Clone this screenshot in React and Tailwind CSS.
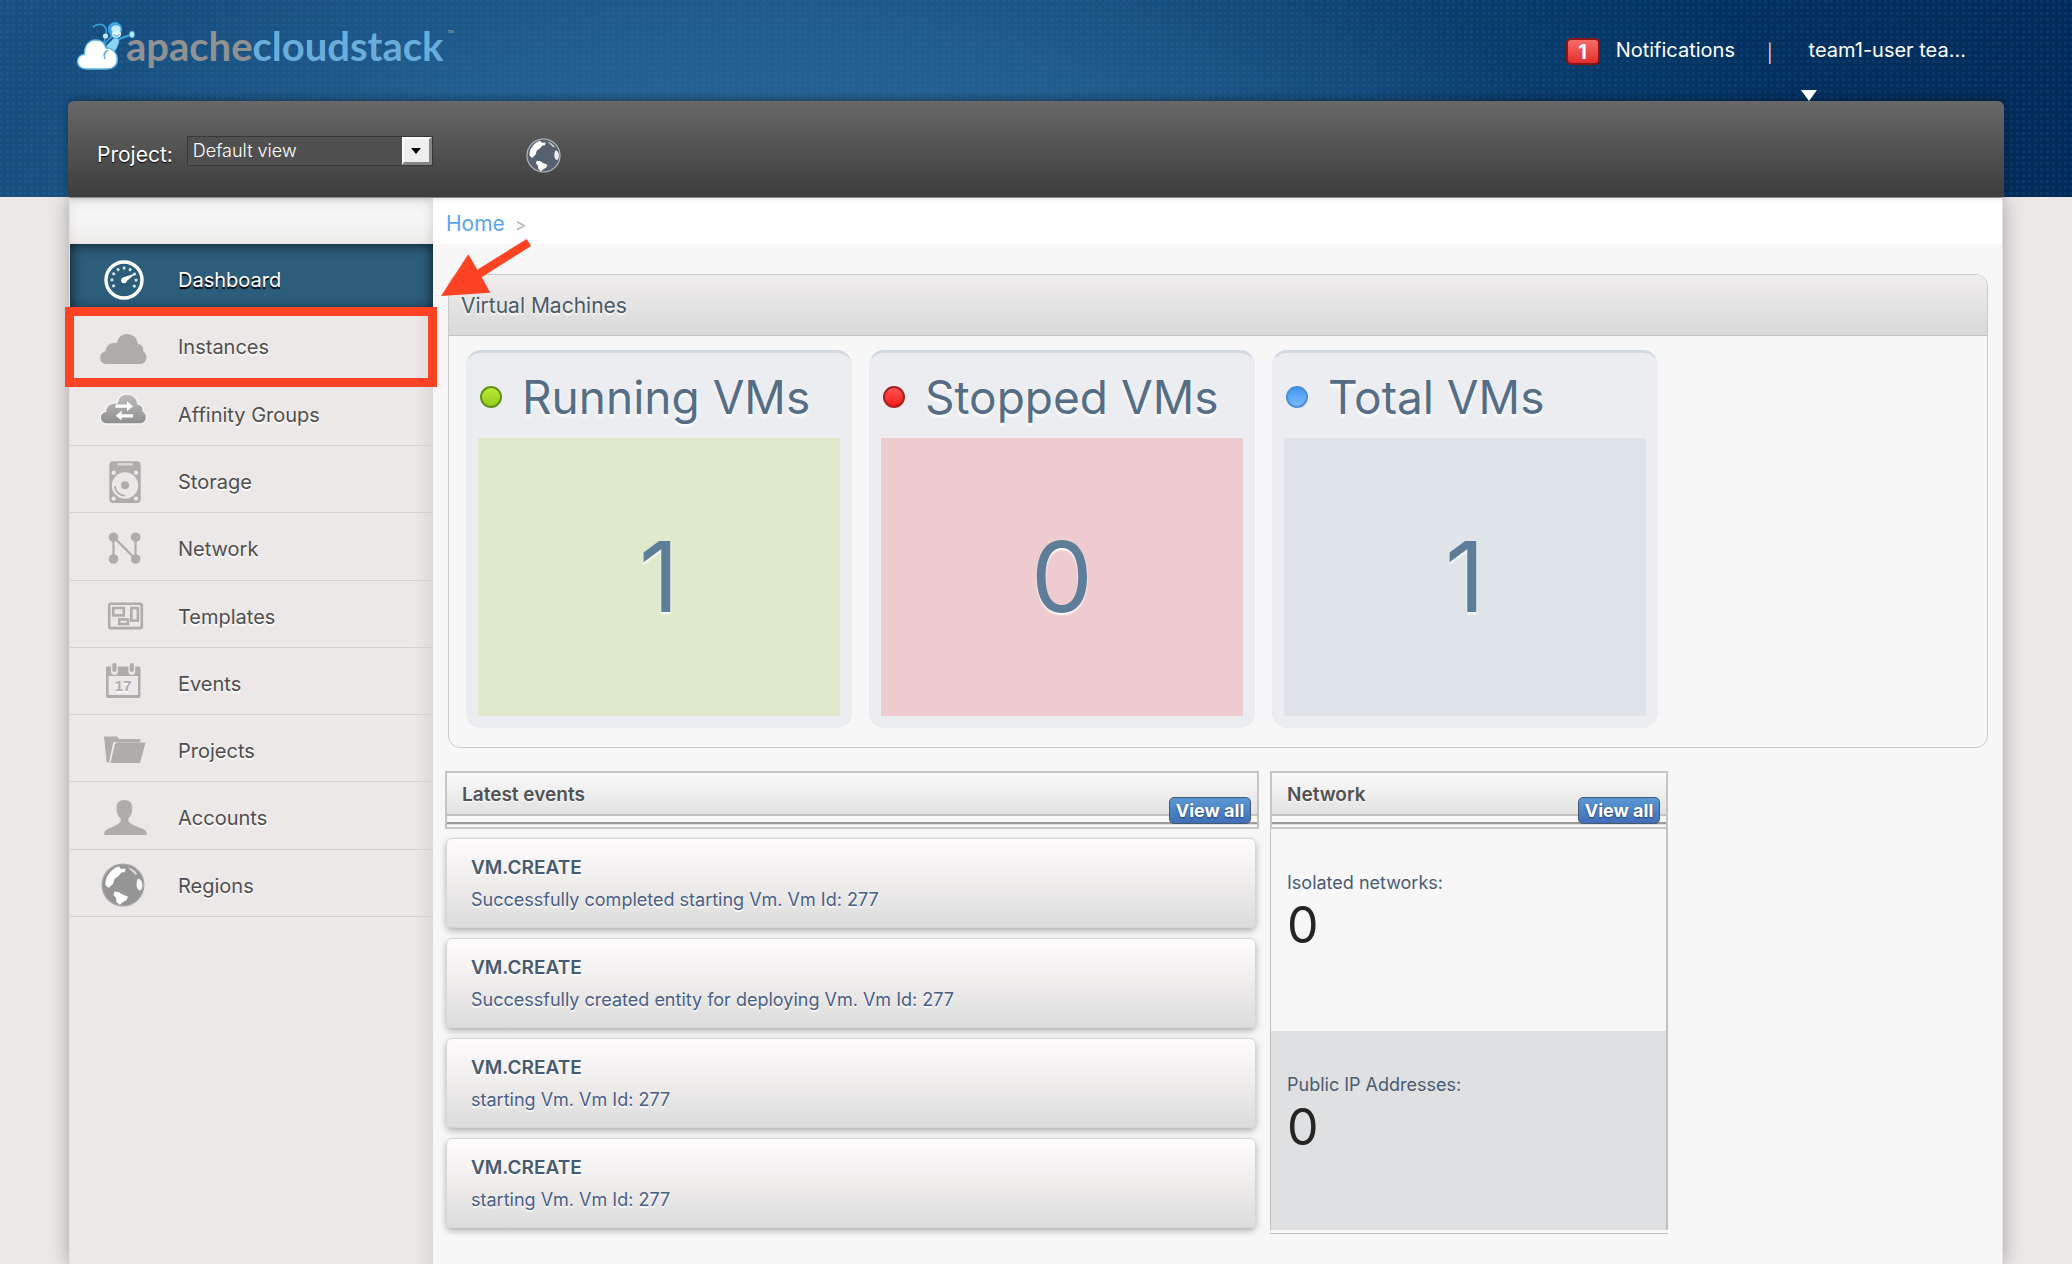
import React from "react";

const GREY = "#aeadac";

function DashboardIcon() {
  const ticks = [-120, -90, -60, -30, 0, 30, 60, 90, 120];
  return (
    <svg className="h-[67px] w-12 shrink-0" viewBox="0 0 48 67" aria-hidden="true">
      <circle cx="24" cy="36" r="18" fill="none" stroke="#fff" strokeWidth="3.4" />
      {ticks.map((a) => (
        <rect key={a} x="22.8" y="22.6" width="2.6" height="2.8" fill="#fff" opacity="0.85" transform={`rotate(${a} 24 36)`} />
      ))}
      <circle cx="24" cy="36.3" r="2.9" fill="#fff" />
      <path d="M23 33.6 36 29.2 25.6 38Z" fill="#fff" />
    </svg>
  );
}

const CLOUD =
  "M6.5 53C2.800 53 .2 50.300.2 46.700c0-3.300 2.300-5.800 5.400-6.400.2-4 2.600-7.400 7-8.300 1-.2 3.600-.2 4.400 0C18 26.500 21.600 23 26.600 23c6 0 10.500 3.600 11.200 9.800 4 .7 5.900 3.400 5.300 7.400 2.200 1.300 3.400 3.400 3.400 6C46.500 50.400 43.400 53 40 53Z";

function InstancesIcon() {
  return (
    <svg className="h-[67px] w-12 shrink-0" viewBox="0 0 48 67" aria-hidden="true">
      <path d={CLOUD} fill={GREY} />
    </svg>
  );
}

function AffinityIcon() {
  return (
    <svg className="h-[67px] w-12 shrink-0" viewBox="0 0 48 67" aria-hidden="true">
      <defs>
        <linearGradient id="affinity" x1="0" y1="0" x2="0" y2="1">
          <stop offset="0" stopColor="#bdbdbd" />
          <stop offset="1" stopColor="#8e8e8e" />
        </linearGradient>
      </defs>
      <g transform="translate(0 -8)">
        <path d={CLOUD} fill="url(#affinity)" stroke="#f6f5f5" strokeWidth="1.4" />
        <path d="M15.500 33.500H27v-3.300l6 5-6 5v-3.500H15.500ZM33 46.400H21.700v3.200l-6-4.900 6-5v3.500H33Z" fill="#fff" />
      </g>
    </svg>
  );
}

function StorageIcon() {
  return (
    <svg className="h-[67px] w-12 shrink-0" viewBox="0 0 48 67" aria-hidden="true">
      <rect x="9.300" y="15.300" width="31.400" height="41.600" rx="4" fill={GREY} />
      <rect x="17.500" y="17" width="15.500" height="2.600" rx="1.300" fill="#ebe8e7" opacity="0.7" />
      <circle cx="25" cy="39.500" r="13.200" fill="#ebe8e7" />
      <circle cx="25" cy="39.300" r="4" fill={GREY} />
      <path d="M15 40c0 5.600 4.500 9.600 10.200 9.800" fill="none" stroke={GREY} strokeWidth="1.600" />
      <circle cx="13.700" cy="26.700" r="2.200" fill="#ebe8e7" />
      <circle cx="36" cy="26.700" r="2.200" fill="#ebe8e7" />
      <circle cx="13.700" cy="52.600" r="2.200" fill="#ebe8e7" />
      <circle cx="36" cy="52.600" r="2.200" fill="#ebe8e7" />
    </svg>
  );
}

function NetworkIcon() {
  return (
    <svg className="h-[67px] w-12 shrink-0" viewBox="0 0 48 67" aria-hidden="true">
      <path d="M13.500 46V24L35.500 46V24" fill="none" stroke={GREY} strokeWidth="2.200" />
      <circle cx="13.500" cy="24.200" r="4.800" fill={GREY} />
      <circle cx="35.600" cy="24.200" r="4.800" fill={GREY} />
      <circle cx="13.500" cy="46" r="4.800" fill={GREY} />
      <circle cx="35.600" cy="46" r="4.800" fill={GREY} />
    </svg>
  );
}

function TemplatesIcon() {
  return (
    <svg className="h-[67px] w-12 shrink-0" viewBox="0 0 48 67" aria-hidden="true">
      <g fill="none" stroke={GREY} strokeWidth="2.600">
        <rect x="9.200" y="22.700" width="32.600" height="24.400" rx="1.500" />
        <rect x="13.200" y="27" width="10.600" height="7.400" />
        <rect x="31.300" y="27" width="6.600" height="12.600" />
        <rect x="19.200" y="38.400" width="8.800" height="4.600" />
      </g>
    </svg>
  );
}

function EventsIcon() {
  return (
    <svg className="h-[67px] w-12 shrink-0" viewBox="0 0 48 67" aria-hidden="true">
      <path d="M8 18.500h31a1.500 1.500 0 0 1 1.500 1.500v28a2 2 0 0 1-2 2H8a2 2 0 0 1-2-2V20a1.500 1.500 0 0 1 2-1.500Z" fill={GREY} />
      <rect x="8.600" y="28" width="29.400" height="19" fill="#ebe8e7" />
      <path d="M11 18v5.400a3.400 3.400 0 0 0 6.800 0V18ZM28.400 18v5.400a3.400 3.400 0 0 0 6.800 0V18Z" fill="#ebe8e7" />
      <rect x="12.300" y="15" width="4.200" height="9" rx="2.100" fill={GREY} />
      <rect x="29.700" y="15" width="4.200" height="9" rx="2.100" fill={GREY} />
      <text x="23.200" y="43" textAnchor="middle" fontFamily="Liberation Sans, Arial, sans-serif" fontWeight="700" fontSize="15" fill={GREY}>
        17
      </text>
    </svg>
  );
}

function ProjectsIcon() {
  return (
    <svg className="h-[67px] w-12 shrink-0" viewBox="0 0 48 67" aria-hidden="true">
      <path d="M4 21.500h13l2 2.500h21.300v3.200H13.200L9 47.600H6.700Z" fill={GREY} />
      <path d="M14.800 29.300 L17.200 27.600H45.600L40 47.900H10.600Z" fill={GREY} />
    </svg>
  );
}

function AccountsIcon() {
  return (
    <svg className="h-[67px] w-12 shrink-0" viewBox="0 0 48 67" aria-hidden="true">
      <path d="M24.300 18c5 0 8 2.800 8 7.600 0 5.400-1.500 9-4 11.200v2.500c2 3.600 9.300 5.200 14.700 7.700 2.800 1.300 3.700 2.300 3.700 6H4.200c0-3.700 1-4.700 3.800-6 5.400-2.500 10.700-4.100 12.700-7.700v-2.500c-2.500-2.200-4.200-5.800-4.200-11.200 0-4.800 2.800-7.600 7.800-7.600Z" fill={GREY} />
    </svg>
  );
}

function Globe({ className, viewBox, ball, rim }) {
  return (
    <svg className={className} viewBox={viewBox} aria-hidden="true">
      <circle cx="22" cy="22" r="20.800" fill={ball} stroke={rim} strokeWidth="1.400" />
      <path d="M6.500 13C10 7 14 4.500 18 3.500l2 2.500 4.500-.5-.5 3.500-3.500.5-2.500 3-4.500 3.500-1.500 5-4.500 4L4.500 22C4.300 18.500 4.800 15.500 6.500 13Z" fill="#fff" />
      <path d="M13.500 28.500 18 29.200l4 2.500 5 1.800-1.500 3.600-4.600 2.700-2 2.200-3.400-3-.6-4.400-2.400-2.400Z" fill="#fff" />
      <path d="M37.500 15.500c2 .5 3.500 2.600 3.900 5.600.3 3.400-.8 6.300-2.300 6.400-2.300 0-3.500-2.300-3.500-5.400s.5-6 1.900-6.600Z" fill="#fff" opacity="0.9" />
      <path d="M27 4.300c4.500 1.300 7.500 3.600 9.500 6.900l-2.500.5C32 9 29 7 27 4.300Z" fill="#fff" opacity="0.65" />
    </svg>
  );
}

function RegionsIcon() {
  return <Globe className="h-[67px] w-12 shrink-0" viewBox="-1 -13 48 67" ball="#959595" rim="#a5a5a5" />;
}

const NAV = [
  { label: "Dashboard", Icon: DashboardIcon, active: true },
  { label: "Instances", Icon: InstancesIcon, marked: true },
  { label: "Affinity Groups", Icon: AffinityIcon },
  { label: "Storage", Icon: StorageIcon },
  { label: "Network", Icon: NetworkIcon },
  { label: "Templates", Icon: TemplatesIcon },
  { label: "Events", Icon: EventsIcon },
  { label: "Projects", Icon: ProjectsIcon },
  { label: "Accounts", Icon: AccountsIcon },
  { label: "Regions", Icon: RegionsIcon },
];

const VMS = [
  { label: "Running VMs", count: 1, dot: "border-[#658f1c] bg-linear-to-b from-[#b9ec30] to-[#95cc20]", box: "bg-[#dfeacd]" },
  { label: "Stopped VMs", count: 0, dot: "border-[#a82020] bg-linear-to-b from-[#ff5252] to-[#f51414]", box: "bg-[#eecbcf]" },
  { label: "Total VMs", count: 1, dot: "border-[#4a8fd8] bg-linear-to-b from-[#4198f2] to-[#7db9fb]", box: "bg-[#dfe4e8]" },
];

const EVENTS = [
  "Successfully completed starting Vm. Vm Id: 277",
  "Successfully created entity for deploying Vm. Vm Id: 277",
  "starting Vm. Vm Id: 277",
  "starting Vm. Vm Id: 277",
];

const NETWORK = [
  { label: "Isolated networks:", value: 0, tone: "h-[202px]" },
  { label: "Public IP Addresses:", value: 0, tone: "h-[199px] bg-[#dfe0e1]" },
];

function Logo() {
  return (
    <a href="#home" className="mt-5 flex h-[52px] items-center font-[Lato,sans-serif] text-[40px] leading-[52px] font-bold">
      <svg className="-mr-[10px] h-[52px] w-[62px] shrink-0" viewBox="0 0 62 52" aria-hidden="true">
        <path d="M30 24c-1-3 3-6 2.500-12C32.200 6 29 4 25 4.500c-3 .3-5 1.500-5.500 2.500M31 24c2-4 5-5 7-8" fill="none" stroke="#3aa0dc" strokeWidth="1.600" strokeLinecap="round" />
        <path d="M37 16 45 19 56 15" fill="none" stroke="#3aa0dc" strokeWidth="2.200" strokeLinecap="round" />
        <circle cx="31.500" cy="16" r="2.600" fill="#bfe6f9" />
        <ellipse cx="58" cy="14.500" rx="2.600" ry="3.400" fill="#bfe6f9" stroke="#3aa0dc" strokeWidth="0.800" />
        <path d="M40 18c5 0 6 2 4.500 6C43 29 40 33 36 34l-4-8Z" fill="#8fd2f3" stroke="#2c95d4" strokeWidth="0.800" />
        <ellipse cx="41" cy="9.500" rx="7" ry="7.400" fill="#3aa9e2" />
        <ellipse cx="42" cy="9.200" rx="4.600" ry="4" fill="#c6ebfb" />
        <ellipse cx="42.500" cy="14" rx="4.600" ry="3.800" fill="#d9f2fd" />
        <path d="M39.500 14.500c1.500 2 4.500 2 5.800 0" fill="none" stroke="#2c95d4" strokeWidth="1" />
        <path d="M12 49C7 49 3.500 45.500 3.500 41.500c0-4 3-6.800 7-7.300C10 27 14 20 21.500 20c6 0 9.500 3.500 10.300 8 6-.6 11.500 4.500 11.500 11.500C43.300 45.500 39 49 33 49Z" fill="#fff" stroke="#5bb6e6" strokeWidth="1.400" />
        <path d="M31 39c-1.500-3.500-.5-7 3-9" fill="none" stroke="#5bb6e6" strokeWidth="1.600" />
      </svg>
      <span className="text-[#919191]">apache</span>
      <span className="text-[#69addb]">cloudstack</span>
      <span className="-mt-3 ml-1 self-start text-[9px] text-[#919191]">™</span>
    </a>
  );
}

function PanelHeader({ id, title }) {
  return (
    <div className="relative flex h-[58px] flex-col border-2 border-[#c5c5c5] border-b-[#cbc7c7]">
      <h2
        id={id}
        className="h-[43px] border-b-2 border-[#c2c2c2] bg-linear-to-b from-[#fafafa] to-[#e2e2e2] pl-[15px] text-[19px] leading-[43px] font-semibold text-[#525252] [text-shadow:0_1px_1px_#fff]"
      >
        {title}
      </h2>
      <div className="mt-[6px] h-[2px] bg-[#989a98]" />
      <div className="h-px bg-[#dedede]" />
      <button
        type="button"
        className="absolute top-6 right-[6px] h-[27px] w-[82px] rounded-[5px] border border-[#44586e] bg-linear-to-b from-[#5b98d3] to-[#416fb9] text-[18px] leading-6 font-bold text-white [text-shadow:0_1px_2px_rgba(0,0,0,.5)]"
      >
        View all
      </button>
    </div>
  );
}

export default function App() {
  return (
    <div className="flex min-h-screen flex-col bg-[#ece8e7] font-[Inter,'Liberation_Sans',sans-serif] text-[20px]">
      <header className="relative z-10 bg-[#0c3c6c] bg-[conic-gradient(from_270deg_at_3px_3px,rgba(50,135,210,.12)_90deg,transparent_0),radial-gradient(ellipse_1050px_420px_at_780px_200px,#2d6a97_0%,rgba(36,98,146,.8)_40%,rgba(18,72,118,.4)_75%,transparent_100%),linear-gradient(90deg,#1c5284_0%,#174a7c_40%,#033260_80%,#032b59_100%)] bg-[size:6px_6px,auto,auto]">
        <div className="flex h-[101px] justify-between pr-[106px] pl-[74px]">
          <Logo />
          <div className="flex items-start text-white">
            <button type="button" className="flex items-start">
              <span className="mt-[38px] flex h-[27px] w-[34px] items-center justify-center rounded-[5px] border-2 border-[#8c1414] bg-linear-to-b from-[#f76a66] to-[#e02c2c] font-bold">
                1
              </span>
              <span className="mt-[34px] ml-4 leading-8">Notifications</span>
            </button>
            <span className="mt-[38px] mr-[28px] ml-8 text-[18px] leading-8 font-light">|</span>
            <button type="button" className="mt-[34px] flex flex-col items-start">
              <span className="pl-2 leading-8">team1-user tea...</span>
              <svg className="mt-[23px] h-3 w-4" viewBox="0 0 16 12" aria-hidden="true">
                <path d="M0 1H16L8 12Z" fill="#fff" />
              </svg>
            </button>
          </div>
        </div>
        <div className="px-[68px]">
          <div className="flex h-24 items-start rounded-t-[6px] bg-linear-to-b from-[#686868] to-[#3d3d3d] pt-[35px] pl-[29px] shadow-[0_-2px_9px_rgba(0,0,0,.35)]">
            <label htmlFor="project" className="pt-px text-[21px] leading-9 text-white [text-shadow:0_1px_1px_#000]">
              Project:
            </label>
            <div className="relative ml-[14px]">
              <select
                id="project"
                defaultValue="default"
                className="block h-[30px] w-[246px] appearance-none border border-[#383838] bg-[#505050] pl-[5px] text-[18px] leading-7 font-light text-white"
              >
                <option value="default">Default view</option>
              </select>
              <span className="pointer-events-none absolute top-px right-px flex h-7 w-[30px] items-center justify-center border-t-2 border-r-[3px] border-b-[3px] border-l-2 border-t-white border-r-[#858585] border-b-[#858585] border-l-white bg-[#efefef]">
                <svg className="h-[6px] w-[10px]" viewBox="0 0 10 6" aria-hidden="true">
                  <path d="M0 0H10L5 6Z" fill="#000" />
                </svg>
              </span>
            </div>
            <button type="button" aria-label="Regions" className="ml-[93px] pt-px">
              <Globe className="h-[37px] w-[35px]" viewBox="0 0 44 44" ball="#56606f" rim="#b9bdc4" />
            </button>
          </div>
        </div>
      </header>

      <div className="mx-[69px] flex flex-1 border-x border-t border-x-[#e3e3e5] border-t-[#9599a3] bg-[#f7f7f7] shadow-[0_0_18px_rgba(0,0,0,.32)]">
        <nav aria-label="Main" className="w-[363px] shrink-0 bg-[#ece8e7] bg-linear-to-l from-[#dddada] via-[#ece8e7] via-[5%] to-[#ece8e7]">
          <div className="h-[46px] bg-linear-to-b from-[#fbfbfb] to-[#efeeed] shadow-[inset_0_6px_12px_rgba(0,0,0,.08),inset_-4px_0_10px_rgba(0,0,0,.05)]" />
          <ul className="grid h-[673px] auto-rows-fr">
            {NAV.map(({ label, Icon, active, marked }) => (
              <li
                key={label}
                className={
                  active
                    ? "relative bg-[#2c5d7b] text-white shadow-[inset_0_0_14px_rgba(0,0,0,.75)] [text-shadow:0_2px_1px_#000]"
                    : "relative border-b border-[#d2d2d2] text-[#4f4f4f] [text-shadow:0_2px_1px_#fff]"
                }
              >
                <a href={`#${label.toLowerCase().replace(" ", "-")}`} className="flex h-full items-start gap-[30px] pl-[30px]">
                  <Icon />
                  <span className="pt-5 leading-8">{label}</span>
                </a>
                {marked && (
                  <span className="pointer-events-none absolute -top-1 -right-1 -bottom-[9px] -left-[5px] z-20 border-9 border-[#fe4325]" />
                )}
              </li>
            ))}
          </ul>
        </nav>

        <main className="relative min-w-0 flex-1">
          <div className="flex h-[46px] items-center gap-[10px] bg-white pt-[6px] pl-[13px]">
            <a href="#home" className="text-[21px] text-[#5ba4ee]">
              Home
            </a>
            <span className="text-[18px] text-[#b5b5b5]">&gt;</span>
          </div>
          <svg className="pointer-events-none absolute top-[30px] left-0 z-20 h-20 w-[110px]" viewBox="0 0 110 80" aria-hidden="true">
            <path d="M8 68 35.300 26.300 44.300 41.700 93.700 11 98 18 48.700 49.300 57.300 64.700Z" fill="#fe4325" />
          </svg>

          <section aria-labelledby="vms" className="mt-[30px] mr-[14px] ml-[15px] overflow-hidden rounded-xl border border-[#cdcacb]">
            <h2
              id="vms"
              className="border-b border-[#c4c1c2] bg-linear-to-b from-[#f0eeed] to-[#d9d9d9] pt-[2px] pl-3 text-[21px] leading-[58px] text-[#4a5967] [text-shadow:0_2px_2px_#fff]"
            >
              Virtual Machines
            </h2>
            <div className="flex flex-wrap gap-[17px] px-[17px] pt-[14px] pb-[19px]">
              {VMS.map(({ label, count, dot, box }) => (
                <article key={label} className="w-[386px] rounded-[15px] border border-t-3 border-[#e9ecef] border-t-[#d2d9e0] bg-[#ebedf1] px-[11px] pb-[11px]">
                  <h3 className="flex h-[85px] items-center gap-5 pt-[3px] pl-[2px] text-[46px] text-[#566e85] [text-shadow:0_3px_3px_#fff]">
                    <span className={`h-[22px] w-[22px] rounded-full border-2 ${dot}`} />
                    {label}
                  </h3>
                  <p className={`text-center text-[98px] leading-[278px] text-[#5d7d99] [text-shadow:0_2px_2px_#fff] ${box}`}>{count}</p>
                </article>
              ))}
            </div>
          </section>

          <div className="mt-[23px] ml-3 flex items-start gap-[11px] pr-3">
            <section aria-labelledby="events" className="flex-[0_1_814px]">
              <PanelHeader id="events" title="Latest events" />
              <ul className="mt-[9px] mr-[3px] ml-px flex flex-col gap-[10px]">
                {EVENTS.map((text, i) => (
                  <li
                    key={i}
                    className="h-[90px] rounded-md border border-[#d6d6d6] bg-linear-to-b from-[#fdfbfc] via-[#efedec] to-[#dcdcdc] pt-[13px] pl-6 leading-8 shadow-[0_3px_6px_rgba(0,0,0,.28)] [text-shadow:0_2px_1px_#fff]"
                  >
                    <p className="text-[19px] font-semibold text-[#475b6e]">VM.CREATE</p>
                    <p className="text-[18px] text-[#4a5f85]">{text}</p>
                  </li>
                ))}
              </ul>
            </section>

            <section aria-labelledby="network" className="flex-[0_1_398px]">
              <PanelHeader id="network" title="Network" />
              <dl className="border-r-2 border-l border-[#c1c1c1]">
                {NETWORK.map(({ label, value, tone }) => (
                  <div key={label} className={`pt-[38px] pl-4 ${tone}`}>
                    <dt className="text-[18px] leading-8 text-[#495b71]">{label}</dt>
                    <dd className="text-[50px] leading-[52px] text-[#252525]">{value}</dd>
                  </div>
                ))}
              </dl>
              <div className="h-1 border-b border-[#c1c1c1]" />
            </section>
          </div>
        </main>
      </div>
    </div>
  );
}
